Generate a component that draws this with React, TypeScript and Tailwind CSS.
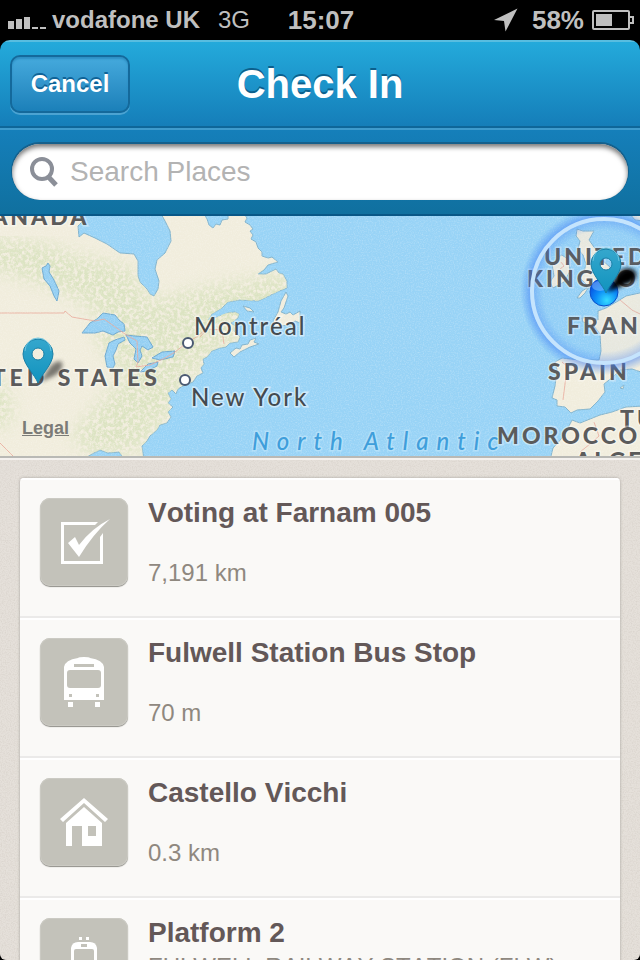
import type { ReactNode } from "react";

function StatusBar() {
  return (
    <div className="flex h-10 shrink-0 items-center justify-between bg-black pr-[6px] pl-2 text-[26px] leading-10 font-bold text-[#bfbfbf]">
      <div className="flex flex-1 items-center">
        <svg width="38" height="12" viewBox="0 0 38 12" fill="#bfbfbf" className="mt-[6px]" role="img" aria-label="Signal strength">
          <rect x="0" y="4" width="6" height="8" />
          <rect x="8" y="2" width="6" height="10" />
          <rect x="16" y="0" width="6" height="12" />
          <rect x="24" y="10" width="6" height="2" />
          <rect x="32" y="10" width="6" height="2" />
        </svg>
        <span className="ml-[6px] text-[24px]">vodafone UK</span>
        <span className="ml-[18px] text-[24px] font-normal">3G</span>
      </div>
      <span>15:07</span>
      <div className="flex flex-1 items-center justify-end">
        <svg width="24" height="24" viewBox="0 0 24 24" fill="#bfbfbf" className="mr-[14px]" role="img" aria-label="Location in use">
          <path d="M23.500 0.500L0 12L10 13L11.500 23.500Z" />
        </svg>
        <span>58%</span>
        <svg width="42" height="20" viewBox="0 0 42 20" className="ml-2" fill="none" role="img" aria-label="Battery">
          <rect x="1" y="1" width="36" height="18" rx="1" stroke="#bfbfbf" strokeWidth="2" />
          <rect x="4" y="4" width="16" height="12" fill="#bfbfbf" />
          <path d="M38 7h3v6h-3" stroke="#bfbfbf" strokeWidth="2" />
        </svg>
      </div>
    </div>
  );
}

function Header() {
  return (
    <header className="shrink-0 overflow-hidden rounded-t-[10px]">
      <div className="grid h-[88px] grid-cols-[1fr_auto_1fr] items-center border-t-2 border-b-2 border-t-[#58bde0] border-b-[#0e6699] bg-linear-to-b from-[#24aadb] to-[#157eb9] px-[10px]">
        <button
          type="button"
          className="h-[58px] w-[120px] justify-self-start rounded-[10px] border-2 border-[#14699b] bg-linear-to-b from-[#45aadd] to-[#1b80b9] text-[24px] font-bold text-white shadow-[0_2px_0_#4ba3d2,inset_0_2px_2px_#2d8fc4] [text-shadow:0_-2px_0_#0f6397]"
        >
          Cancel
        </button>
        <h1 className="text-[40px] leading-[48px] font-bold text-white [text-shadow:0_-2px_0_#0c5f8c]">Check In</h1>
      </div>
      <form role="search" className="border-t-2 border-b-2 border-t-[#3f9bcd] border-b-[#085787] bg-linear-to-b from-[#157fba] to-[#10709f] px-3 pt-[14px] pb-[14px]" onSubmit={(e) => e.preventDefault()}>
        <label className="flex h-14 items-center rounded-full bg-white pl-[18px] shadow-[0_-1px_0_1px_#15608c,inset_0_3px_5px_#777777]">
          <svg width="28" height="30" viewBox="0 0 28 30" fill="none" stroke="#8b8f98" aria-hidden="true">
            <circle cx="12" cy="12" r="10" strokeWidth="4" />
            <path d="M18.500 20L26 28" strokeWidth="5" />
          </svg>
          <input
            type="search"
            aria-label="Search Places"
            placeholder="Search Places"
            className="ml-3 min-w-0 flex-1 bg-transparent text-[28px] text-[#333333] outline-none placeholder:text-[#b3b3b3]"
          />
        </label>
      </form>
    </header>
  );
}

function Pin({ x, y }: { x: number; y: number }) {
  return (
    <g transform={`translate(${x} ${y})`}>
      <path
        fillRule="evenodd"
        d="M0 0C-3 -8 -15 -19 -15 -29A15 15 0 0 1 15 -29C15 -19 3 -8 0 0ZM0 -35A6 6 0 1 0 0 -23A6 6 0 1 0 0 -35Z"
        fill="url(#pinFill)"
        stroke="#1a7fa6"
        strokeWidth="1"
      />
      <path d="M-13 -32A13 13 0 0 1 13 -32" fill="none" stroke="#6cc4e0" strokeWidth="1" />
    </g>
  );
}

const countries = [
  { name: "CANADA", x: -27, y: 9 },
  { name: "UNITED", x: 544, y: 49 },
  { name: "KINGDOM", x: 527, y: 71 },
  { name: "FRANCE", x: 567, y: 118 },
  { name: "SPAIN", x: 548, y: 164 },
  { name: "TUNISIA", x: 620, y: 211 },
  { name: "MOROCCO", x: 497, y: 228 },
  { name: "ALGERIA", x: 575, y: 253 },
];

const northAmerica =
  "M-4 -4H68L76 2L83 5L78 10L79 21L84 17L95 22L107 28L120 37L134 38L138 45L138 60L140 66L147 73L150 78L154 80L158 73L159 65L155 53L157 44L165 37L171 25L170 15L165 5L160 -4H203L207 3L209 9L213 12L216 8L220 9L222 4L228 3L228 -4H243L247 2L245 6L250 9L253 13L250 15L253 19L251 23L256 26L258 32L262 36L262 40L268 42L272 41L278 46L268 49L264 54L258 58L266 58L276 53L279 57L283 58L287 65L287 72L277 76L267 81L258 85L240 84L228 86L222 92L212 98L208 104L217 101L225 97L235 96L239 98L238 102L231 107L235 110L234 115L240 121L238 126L230 127L226 131L220 132L212 135L207 141L203 143L204 148L201 152L203 157L197 160L193 166L183 170L178 173L176 178L172 174L168 177L171 183L168 187L173 191L168 196L171 201L167 207L160 209L157 214L150 220L147 225L142 230L144 244H125L119 236L108 237L100 234L92 238L82 244H-4Z";

const lakes = [
  "M42 52L46 50L48 47L50 50L49 56L54 64L59 75L57 85L54 80L50 70L44 63Z",
  "M82 117L90 107L97 103L103 97L115 99L119 104L124 108L125 115L118 116L113 119L103 115L95 117Z",
  "M107 151L105 140L109 127L115 124L124 121L125 124L118 128L116 134L113 140L115 148L113 152Z",
  "M126 119L135 120L147 121L153 131L148 134L142 130L140 134L142 140L138 147L134 143L136 133L130 127Z",
  "M140 156L148 148L158 146L157 150L147 155Z",
  "M152 142L162 136L175 135L173 141L160 144Z",
];

const islands = [
  "M286 76L288 80L284 92L281 96L286 98L290 96L293 99L300 95L300 107L295 105L290 109L272 111L274 103L278 96L281 85Z",
  "M230 137L236 132L240 133L242 129L248 128L250 124L256 122L254 126L259 128L250 131L240 136L234 141Z",
  "M243 90L250 92L254 96L247 95Z",
  "M552 48L557 46L558 41L562 39L569 44L570 55L564 66L553 72L550 66L554 60Z",
  "M577 13L583 15L594 15L589 24L594 31L598 36L602 44L610 51L614 62L606 69L597 71L588 72L585 77L580 82L577 82L582 75L587 72L586 68L580 62L584 56L586 48L583 39L578 33L580 25L576 20Z",
];

const europe =
  "M644 76L626 80L618 85L606 92L598 95L598 104L592 101L582 102L583 106L594 110L600 118L601 135L599 144L580 144L562 142L555 146L557 154L555 170L552 182L557 184L557 190L565 191L571 197L577 194L590 193L598 185L605 176L604 168L613 161L620 154L632 153L644 157Z";

const africa = "M572 204L580 207L600 199L612 196L626 191L644 190V244H550L553 232L562 222L568 212Z";

function MapView() {
  return (
    <section aria-label="Map of nearby places" className="relative h-[244px] shrink-0 overflow-hidden border-b-2 border-[#f4f1ee] bg-[#98d3f6]">
      <svg viewBox="0 0 640 240" preserveAspectRatio="xMidYMid slice" className="block h-[242px] w-full border-b-2 border-[#b9b9b5]">
        <defs>
          <linearGradient id="pinFill" x1="0" y1="0" x2="0" y2="1">
            <stop offset="0" stopColor="#35a7cd" />
            <stop offset="1" stopColor="#1193be" />
          </linearGradient>
          <radialGradient id="dotFill" cx="0.600" cy="0.800" r="0.800">
            <stop offset="0" stopColor="#35dcff" />
            <stop offset="0.500" stopColor="#0b8cf8" />
            <stop offset="1" stopColor="#0645dc" />
          </radialGradient>
          <radialGradient id="halo">
            <stop offset="0" stopColor="#3f8cf5" stopOpacity="0.020" />
            <stop offset="0.720" stopColor="#3f8cf5" stopOpacity="0.060" />
            <stop offset="0.840" stopColor="#3f7ff5" stopOpacity="0.360" />
            <stop offset="0.890" stopColor="#3f7ff5" stopOpacity="0.480" />
            <stop offset="1" stopColor="#3f8cf5" stopOpacity="0" />
          </radialGradient>
          <filter id="soft" x="-50%" y="-50%" width="200%" height="200%">
            <feGaussianBlur stdDeviation="2" />
          </filter>
          <filter id="speckle" x="0" y="0" width="100%" height="100%">
            <feGaussianBlur in="SourceGraphic" stdDeviation="9" result="area" />
            <feTurbulence type="fractalNoise" baseFrequency="0.270" numOctaves="4" seed="4" />
            <feColorMatrix values="0 0 0 0 0  0 0 0 0 0  0 0 0 0 0  0 0 0 4 -1.300" />
            <feComposite in="area" operator="in" />
          </filter>
          <filter id="grain" x="0" y="0" width="100%" height="100%">
            <feTurbulence type="fractalNoise" baseFrequency="0.770" numOctaves="2" seed="8" />
            <feColorMatrix values="0 0 0 0 1  0 0 0 0 1  0 0 0 0 1  0 0 0 2 -0.850" />
          </filter>
          <clipPath id="americaClip">
            <path d={northAmerica} />
          </clipPath>
        </defs>
        <g fill="#f1eddd" stroke="#83b4cd" strokeWidth="1">
          <path d={northAmerica} />
          <path d={europe} />
          <path d={africa} />
          {islands.map((d) => (
            <path key={d} d={d} />
          ))}
          <path d="M630 -2H644V5L635 4Z" />
          <path d="M620 172L624 169L623 173Z" />
        </g>
        <g clipPath="url(#americaClip)">
          <g filter="url(#speckle)" fill="#dbe3c1">
            <path d="M-20 20L40 26L75 38L130 50L150 85L200 72L290 55V110L235 125L195 155L165 205L140 235L90 240L70 220L100 185L125 160L95 125L100 100L60 75L-20 50Z" />
            <path d="M-20 155L5 165L15 205L-20 220Z" />
          </g>
        </g>
        <g fill="#94cff3" stroke="#6fa9cf" strokeWidth="1">
          {lakes.map((d) => (
            <path key={d} d={d} />
          ))}
        </g>
        <g fill="none" stroke="#e9a798" strokeWidth="1" opacity="0.800">
          <path d="M0 97H64L65 95L72 101L95 105L104 103L125 118L137 125L138 146L136 151L150 149L165 142L175 136L188 126L198 120L209 110" />
          <path d="M200 121L207 113L222 114L224 128M0 227L13 240" />
          <path d="M562 146L567 150L565 168L563 184M561 46L564 50L560 53M620 84L632 94L640 98M594 206L599 220L590 228L580 236" />
        </g>
        <path d="M211 104L218 97L226 92L234 94L216 101L206 109Z" fill="#98d3f6" />
        <rect width="640" height="240" filter="url(#grain)" opacity="0.250" />

        <g fill="#ffffff" stroke="#4b5a72" strokeWidth="2">
          <circle cx="188" cy="127" r="5" />
          <circle cx="185" cy="164" r="5" />
        </g>
        <g className="font-['Lato',sans-serif] text-[24px] font-medium tracking-[2px]" fill="#444b50" stroke="#ffffff" strokeOpacity="0.500" strokeWidth="3" paintOrder="stroke">
          <text x="194" y="119">Montréal</text>
          <text x="191" y="190">New York</text>
        </g>
        <text x="252" y="234" className="font-['Lato',sans-serif] text-[24px] font-medium tracking-[8px] italic" fill="#3f9edb" stroke="#c4e8fb" strokeOpacity="0.600" strokeWidth="3" paintOrder="stroke">
          North Atlantic
        </text>
        <g className="font-['Lato',sans-serif] text-[23px] font-black tracking-[3px]" fill="#5b5b5b" stroke="#ffffff" strokeOpacity="0.400" strokeWidth="3" paintOrder="stroke">
          {countries.map((c) => (
            <text key={c.name} x={c.x} y={c.y}>
              {c.name}
            </text>
          ))}
          <text x="161" y="170" textAnchor="end" className="tracking-[4px]">
            UNITED STATES
          </text>
        </g>

        <circle cx="604" cy="75" r="84" fill="url(#halo)" />
        <circle cx="604" cy="75" r="72" fill="none" stroke="#c5e4fd" strokeWidth="4" />
        <circle cx="604" cy="76" r="14" fill="url(#dotFill)" stroke="#0a4fc9" strokeWidth="1" />
        <ellipse cx="600" cy="70" rx="8" ry="5" fill="#8cc6ff" opacity="0.500" />
        <path d="M607 76L618 58Q626 49 635 55Q639 64 627 68Z" fill="#000000" filter="url(#soft)" />
        <path d="M40 166L49 152Q56 143 62 146Q64 154 54 160Z" fill="#000000" opacity="0.500" filter="url(#soft)" />
        <Pin x={606} y={77} />
        <Pin x={38} y={167} />
      </svg>
      <a href="#legal" className="absolute top-[200px] left-[22px] text-[18px] leading-6 font-bold text-[#7b7b77] underline">
        Legal
      </a>
    </section>
  );
}

function BallotIcon() {
  return (
    <svg viewBox="0 0 88 88" className="size-full" fill="#ffffff" aria-hidden="true">
      <path d="M21 24H58L55 27H24V63H60V39L63 35V66H21Z" />
      <path d="M28 45L35 39L39 47Q52 30 70 21Q53 36 39 59Z" />
    </svg>
  );
}

function BusIcon() {
  return (
    <svg viewBox="0 0 88 88" className="size-full" aria-hidden="true">
      <path d="M24 62V29Q25 22 38 20Q39 19 44 19Q49 19 50 20Q63 22 64 29V62Z" fill="#ffffff" />
      <path d="M28 64H33V69H28ZM55 64H60V69H55Z" fill="#ffffff" />
      <g fill="#c3c2ba">
        <rect x="34" y="26" width="20" height="3" />
        <rect x="27" y="32" width="34" height="18" rx="3" />
        <rect x="29" y="56" width="3" height="3" />
        <rect x="56" y="56" width="3" height="3" />
      </g>
    </svg>
  );
}

function HouseIcon() {
  return (
    <svg viewBox="0 0 88 88" className="size-full" fill="#ffffff" aria-hidden="true">
      <path d="M44 20L68 41L65 44L44 25L23 44L20 41Z" />
      <path fillRule="evenodd" d="M44 29L62 45V68H42V48H32V68H26V45ZM48 48V58H56V48Z" />
    </svg>
  );
}

function TrainIcon() {
  return (
    <svg viewBox="0 0 88 88" className="size-full" aria-hidden="true">
      <path d="M39 19h3v3h-3ZM46 19h3v3h-3Z" fill="#ffffff" />
      <path d="M31 62V30Q32 24 38 24H50Q56 24 57 30V62Z" fill="#ffffff" />
      <rect x="41" y="26" width="6" height="3" fill="#c3c2ba" />
      <rect x="34" y="31" width="20" height="14" rx="2" fill="#c3c2ba" />
    </svg>
  );
}

type Place = { name: string; address?: string; distance: string; icon: ReactNode };

const places: Place[] = [
  { name: "Voting at Farnam 005", distance: "7,191 km", icon: <BallotIcon /> },
  { name: "Fulwell Station Bus Stop", distance: "70 m", icon: <BusIcon /> },
  { name: "Castello Vicchi", distance: "0.3 km", icon: <HouseIcon /> },
  { name: "Platform 2", address: "FULWELL RAILWAY STATION (FLW)", distance: "", icon: <TrainIcon /> },
];

function PlaceRow({ place }: { place: Place }) {
  return (
    <li className="flex h-[140px] gap-5 border-t-2 border-b-2 border-t-white border-b-[#ebeae9] px-5 pt-[18px]">
      <div className="size-[88px] shrink-0 rounded-[10px] bg-[#c3c2ba] shadow-[0_1px_1px_#8f8e88,inset_0_0_0_1px_#cbcac3]">{place.icon}</div>
      <div className="min-w-0 whitespace-nowrap [font-kerning:none]">
        <h2 className="text-[28px] leading-[30px] font-bold text-[#635858]">{place.name}</h2>
        <p className="mt-[6px] h-[26px] text-[24px] leading-[26px] text-[#8f887f]">{place.address}</p>
        <p className="text-[24px] leading-[26px] text-[#8f887f]">{place.distance}</p>
      </div>
    </li>
  );
}

export default function App() {
  return (
    <div className="h-screen bg-black font-['Liberation_Sans',Arial,sans-serif]">
      <div className="flex h-full flex-col overflow-hidden rounded-b-[6px]">
        <StatusBar />
        <Header />
        <MapView />
        <main className="relative min-h-0 flex-1 overflow-hidden bg-[#e5e0da] px-5 pt-[18px]">
          <svg className="absolute inset-0 size-full" aria-hidden="true">
            <filter id="paper">
              <feTurbulence type="fractalNoise" baseFrequency="0.770" numOctaves="2" seed="3" />
              <feColorMatrix values="0 0 0 0 0.450  0 0 0 0 0.400  0 0 0 0 0.350  0 0 0 1.500 -0.600" />
            </filter>
            <rect width="100%" height="100%" filter="url(#paper)" opacity="0.300" />
          </svg>
          <ul className="relative overflow-hidden rounded-t-[4px] bg-[#faf9f7] shadow-[0_0_3px_#a39e98]">
            {places.map((p) => (
              <PlaceRow key={p.name} place={p} />
            ))}
          </ul>
        </main>
      </div>
    </div>
  );
}
